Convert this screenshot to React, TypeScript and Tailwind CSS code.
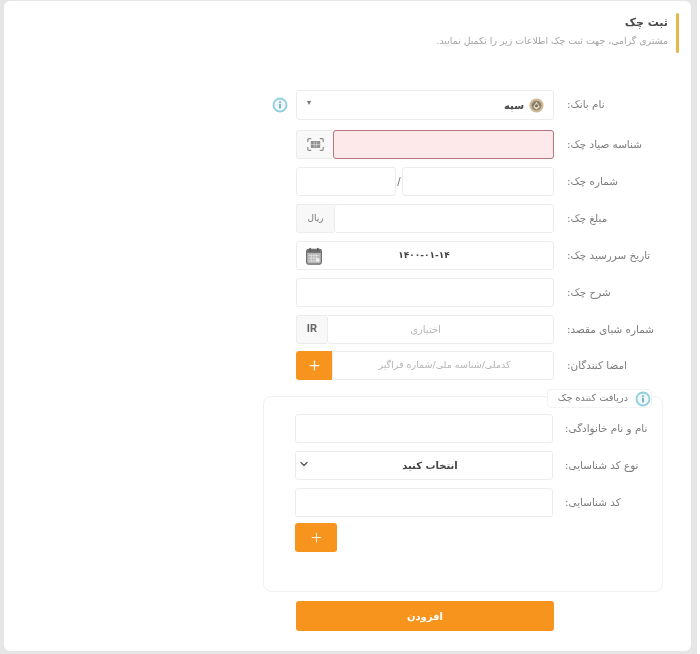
import { Plus, ChevronDown } from "lucide-react";
import type { ReactNode } from "react";

function InfoIcon() {
  return (
    <svg viewBox="0 0 16 16" className="h-[16px] w-[16px]" fill="none">
      <circle cx="8" cy="8" r="6.5" fill="#eef8fb" stroke="#8fd0dc" strokeWidth="1.8" />
      <rect x="7.2" y="6.8" width="1.6" height="4.6" fill="#6a9fc0" />
      <rect x="7.2" y="4.3" width="1.6" height="1.6" fill="#6a9fc0" />
    </svg>
  );
}

function BankLogo() {
  return (
    <svg viewBox="0 0 16 16" className="h-[15px] w-[15px]">
      <circle cx="8" cy="8" r="7.5" fill="#cdb994" />
      <circle cx="8" cy="8" r="5.2" fill="#8d8272" />
      <path d="M4.5 9.5 8 4l3.5 5.5L8 12.5z" fill="#e4d8c2" />
      <circle cx="8" cy="8.2" r="1.6" fill="#7a6f60" />
    </svg>
  );
}

function ScanIcon() {
  return (
    <svg viewBox="0 0 20 16" className="h-[15px] w-[17px]" fill="none" stroke="#8a8a8a" strokeWidth="1.4">
      <path d="M1 5V2a1 1 0 0 1 1-1h3M15 1h3a1 1 0 0 1 1 1v3M19 11v3a1 1 0 0 1-1 1h-3M5 15H2a1 1 0 0 1-1-1v-3" />
      <rect x="5" y="4.5" width="10" height="7" fill="#8f8f8f" strokeWidth="1" />
      <path d="M8.5 4.5v7M11.5 4.5v7M5 8h10" stroke="#d8d8d8" strokeWidth="0.8" />
    </svg>
  );
}

function CalendarIcon() {
  return (
    <svg viewBox="0 0 18 20" className="h-[18px] w-[18px]">
      <rect x="0.8" y="2.5" width="16.4" height="16.5" rx="2" fill="#b5b5b5" stroke="#666" strokeWidth="1.2" />
      <rect x="1.5" y="3" width="15" height="3.5" fill="#6c6c6c" />
      <rect x="4" y="0.8" width="1.6" height="4" rx="0.8" fill="#555" />
      <rect x="12.4" y="0.8" width="1.6" height="4" rx="0.8" fill="#555" />
      <path d="M3 9.5h12M3 12.5h12M3 15.5h12M6 8v9M9 8v9M12 8v9" stroke="#e4e4e4" strokeWidth="0.8" />
      <rect x="11.5" y="13" width="3.5" height="3" fill="#f3f3f3" />
    </svg>
  );
}

function Row({ label, children, aside, className = "h-[29px]" }: { label: string; children: ReactNode; aside?: ReactNode; className?: string }) {
  return (
    <div className={`flex items-center ${className}`}>
      <div className="flex w-[292px] justify-end pr-[8px]">{aside}</div>
      <div className="flex h-full w-[258px] text-[10px]">{children}</div>
      <div dir="rtl" className="ml-[13px] w-[90px] text-left text-[10.4px] whitespace-nowrap text-[#7b7b7b]">
        {label}
      </div>
    </div>
  );
}

function SubRow({ label, children }: { label: string; children: ReactNode }) {
  return (
    <div className="flex h-[29px] items-center">
      <div className="h-full w-[258px]">{children}</div>
      <div dir="rtl" className="ml-[12px] w-[90px] text-left text-[10.4px] whitespace-nowrap text-[#7b7b7b]">
        {label}
      </div>
    </div>
  );
}

const box = "rounded-[3px] border border-[#ececec] bg-white";
const addon = "flex items-center justify-center rounded-l-[3px] border border-[#ececec] bg-[#f8f8f8]";

export default function App() {
  return (
    <div dir="ltr" className="h-[654px] w-[700px] overflow-hidden bg-white font-['DejaVu_Sans',sans-serif] blur-[0.5px]">
      <div className="h-full w-[697px] bg-[#e6e6e6] pt-px pr-[6px] pb-[3px] pl-[4px]">
        <div className="h-full rounded-[6px] bg-white">
          {/* Header */}
          <div className="flex justify-end pt-[12px] pr-[12px]">
            <div dir="rtl" className="mr-[8px] pt-px text-right">
              <h1 className="text-[11px] leading-[18px] font-bold text-[#4a4a4a]">ثبت چک</h1>
              <p className="mt-[2px] text-[9.4px] leading-[14px] text-[#a3a3a3]">
                مشتری گرامی، جهت ثبت چک اطلاعات زیر را تکمیل نمایید.
              </p>
            </div>
            <div className="h-[40px] w-[3px] rounded-sm bg-[#e8b64e]" />
          </div>

          {/* Main form */}
          <div className="mt-[37px] flex flex-col">
            <Row label="نام بانک:" aside={<InfoIcon />} className="h-[30px]">
              <div className={`${box} flex w-full items-center justify-between pr-[9px] pl-[10px]`}>
                <span className="mb-[4px] text-[8px] text-[#777]">▾</span>
                <div dir="rtl" className="flex items-center gap-[5px] font-bold text-[#444]">
                  <BankLogo />
                  <span>سپه</span>
                </div>
              </div>
            </Row>

            <div className="mt-[10px] flex flex-col gap-[8px]">
              <Row label="شناسه صیاد چک:">
                <div className={`${addon} w-[37px] border-r-0`}>
                  <ScanIcon />
                </div>
                <div className="flex-1 rounded-[3px] border-[1.5px] border-[#b9727f] bg-[#fde8ea]" />
              </Row>
              <Row label="شماره چک:">
                <div className={`${box} w-[100px]`} />
                <span className="flex w-[6px] items-center justify-center text-[#666]">/</span>
                <div className={`${box} flex-1`} />
              </Row>
              <Row label="مبلغ چک:">
                <div className={`${addon} w-[38px] border-r-0 text-[9px] text-[#777]`}>ریال</div>
                <div className={`${box} flex-1`} />
              </Row>
              <Row label="تاریخ سررسید چک:">
                <div className={`${box} flex w-full items-center pr-[28px] pl-[8px]`}>
                  <CalendarIcon />
                  <span dir="rtl" className="flex-1 text-center text-[9px] font-bold text-[#444]">۱۴۰۰-۰۱-۱۴</span>
                </div>
              </Row>
              <Row label="شرح چک:">
                <div className={`${box} w-full`} />
              </Row>
              <Row label="شماره شبای مقصد:">
                <div className={`${addon} w-[31px] border-r-0 font-['Roboto',sans-serif] text-[11px] font-bold text-[#666]`}>IR</div>
                <div dir="rtl" className={`${box} flex flex-1 items-center justify-center pr-[30px] text-[10px] text-[#b5b5b5]`}>
                  اختیاری
                </div>
              </Row>
              <Row label="امضا کنندگان:" className="-mt-px h-[29px]">
                <button className="flex w-[36px] items-center justify-center rounded-l-[3px] bg-[#f7941d] text-white">
                  <Plus size={15} strokeWidth={2} />
                </button>
                <div dir="rtl" className={`${box} flex flex-1 items-center justify-center pl-[3px] text-[9.5px] text-[#b5b5b5]`}>
                  کدملی/شناسه ملی/شماره فراگیر
                </div>
              </Row>
            </div>
          </div>

          {/* Check receiver box */}
          <div className="relative mt-[16px] ml-[259px] h-[196px] w-[400px] rounded-[8px] border border-[#f1f1f1] pt-[17px] pl-[31px]">
            <div dir="rtl" className="absolute -top-[8px] right-[10px] flex h-[19px] w-[105px] items-center gap-[7px] rounded-[4px] border border-[#f3f3f3] bg-white text-[9.7px] text-[#777]">
              <InfoIcon />
              <span>دریافت کننده چک</span>
            </div>
            <div className="flex flex-col gap-[8px]">
              <SubRow label="نام و نام خانوادگی:">
                <div className={`${box} h-full w-full`} />
              </SubRow>
              <SubRow label="نوع کد شناسایی:">
                <div className={`${box} flex h-full w-full items-center pr-[2px] pl-[2px]`}>
                  <ChevronDown size={12} strokeWidth={2.5} className="mb-[3px] text-[#555]" />
                  <span dir="rtl" className="flex-1 text-center text-[10px] font-bold text-[#444]">انتخاب کنید</span>
                </div>
              </SubRow>
              <SubRow label="کد شناسایی:">
                <div className={`${box} h-full w-full`} />
              </SubRow>
            </div>
            <button className="mt-[6px] flex h-[29px] w-[42px] items-center justify-center rounded-[3px] bg-[#f7941d] text-white">
              <Plus size={15} strokeWidth={1.5} />
            </button>
          </div>

          <button className="mt-[9px] ml-[292px] h-[30px] w-[258px] rounded-[3px] bg-[#f7941d] text-[10px] font-bold text-white">
            افزودن
          </button>
        </div>
      </div>
    </div>
  );
}
